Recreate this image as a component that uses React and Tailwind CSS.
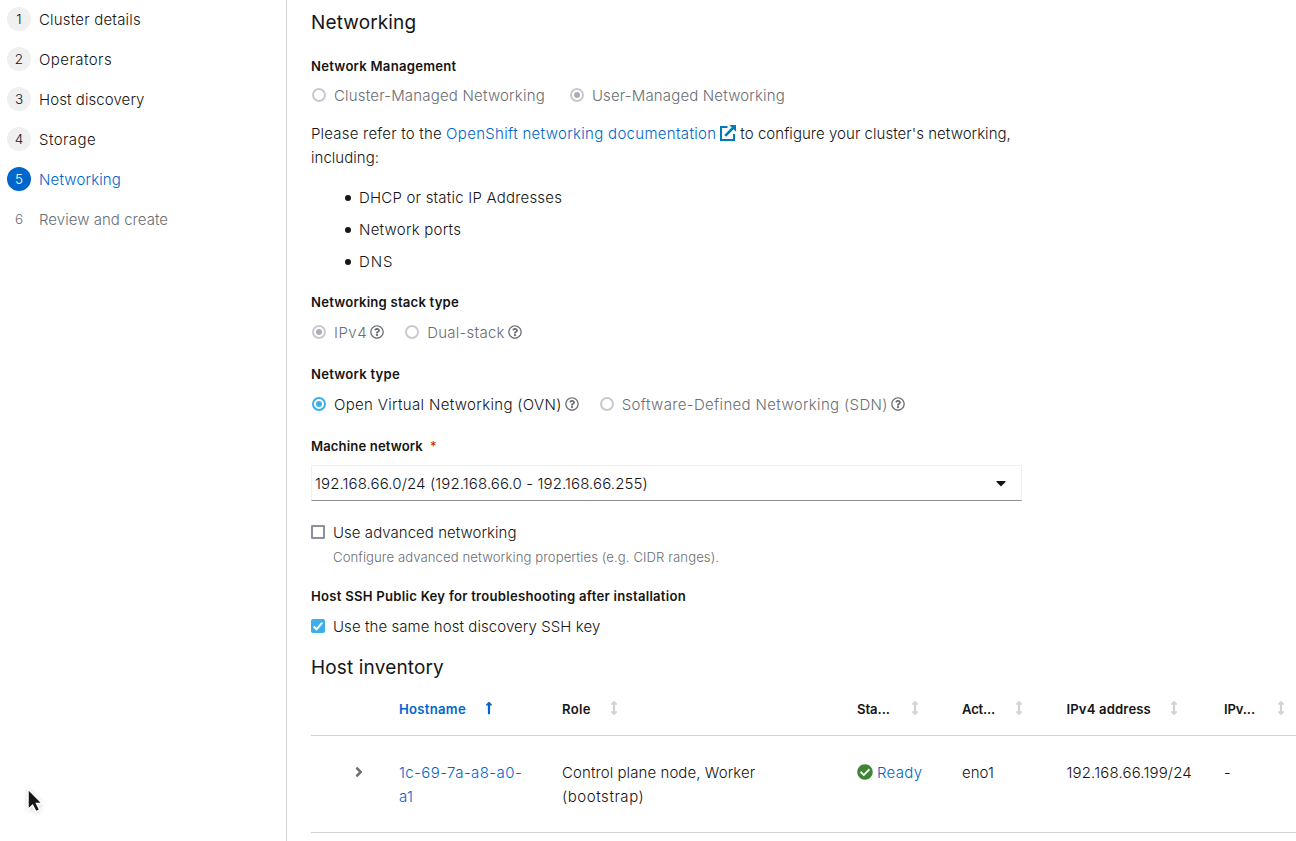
import React from "react";
import {
  FaAngleRight,
  FaArrowsAltV,
  FaCaretDown,
  FaCheckCircle,
  FaLongArrowAltUp,
  FaRegQuestionCircle,
} from "react-icons/fa";

const steps = [
  { label: "Cluster details", tracking: "tracking-[0.2px]" },
  { label: "Operators", tracking: "tracking-[0.44px]" },
  { label: "Host discovery", tracking: "tracking-[0.08px]" },
  { label: "Storage", tracking: "tracking-[0.44px]" },
  { label: "Networking", state: "current", tracking: "tracking-[0.15px]" },
  { label: "Review and create", state: "disabled", tracking: "tracking-[0.04px]" },
];

function Step({ number, label, state, tracking = "" }) {
  const circle =
    state === "current"
      ? "bg-[#0066cc] text-white"
      : state === "disabled"
        ? "text-[#6a6e73]"
        : "bg-[#f0f0f0] text-[#151515]";
  const text =
    state === "current" ? "text-[#0066cc]" : state === "disabled" ? "text-[#6a6e73]" : "text-[#151515]";
  return (
    <li className="flex h-6 items-center gap-2">
      <span className={`flex size-6 items-center justify-center rounded-full text-[13.5px] ${circle}`}>
        {number}
      </span>
      <span className={`pt-px ${text} ${tracking}`}>{label}</span>
    </li>
  );
}

function FieldLabel({ className = "", children }) {
  return (
    <div className={`flex h-[21px] items-center text-[13.125px] font-semibold text-[#151515] ${className}`}>
      {children}
    </div>
  );
}

function Radio({ label, checked, disabled, help, className = "" }) {
  const ring = disabled ? "border-[#c9c9d0]" : "border-[#3daee9]";
  const dot = disabled ? "bg-[#adadb8]" : "bg-[#3daee9]";
  return (
    <div className="flex h-6 items-center">
      <span className={`ml-px flex size-[14px] items-center justify-center rounded-full border-2 ${ring}`}>
        {checked && <span className={`size-[6px] rounded-full ${dot}`} />}
      </span>
      <span
        className={`ml-2 whitespace-nowrap pt-px ${disabled ? "text-[#6a6e73]" : "text-[#151515]"} ${className}`}
      >
        {label}
      </span>
      {help && <FaRegQuestionCircle className="ml-[3px] size-[14px] text-[#6a6e73]" />}
    </div>
  );
}

function ExternalLink() {
  return (
    <svg viewBox="0 0 16 16" className="mx-1 inline-block size-4 align-[-2px]" fill="none" stroke="#007bba">
      <path d="M7.5 2H1V15H14V9" strokeWidth="2" />
      <path d="M5.2 10.8L13 3" strokeWidth="2.6" />
      <path d="M9.3 0H16V6.7Z" fill="#007bba" stroke="none" />
    </svg>
  );
}

function Bullet({ children, tracking }) {
  return (
    <li className="flex items-center gap-2">
      <span className="size-1.5 rounded-full bg-[#151515]" />
      <span className={tracking}>{children}</span>
    </li>
  );
}

function HeaderCell({ children, gap = "ml-6", tracking = "" }) {
  return (
    <div className="flex items-center pb-0.5">
      <span className={`whitespace-nowrap pt-px ${tracking}`}>{children}</span>
      <FaArrowsAltV className={`h-[14px] w-2 shrink-0 text-[#d2d2d2] ${gap}`} />
    </div>
  );
}

function Cursor() {
  return (
    <svg viewBox="0 0 20 30" className="absolute left-[25px] top-[786px] h-[30px] w-5 drop-shadow-sm">
      <path
        d="M3 3v20.5l4.6-4.2 3.2 6.4 4-1.8-3.2-6.3h6Z"
        fill="#151515"
        stroke="#fff"
        strokeWidth="1.5"
      />
    </svg>
  );
}

const columns = "grid grid-cols-[88px_163px_295px_105px_104.5px_157.5px_90px]";

export default function App() {
  return (
    <div className="relative flex h-screen w-full overflow-hidden bg-white font-['Inter',sans-serif] text-[15px] font-[350] leading-6 text-[#151515]">
      <nav className="w-[287px] shrink-0 border-r border-[#d2d2d2] pl-[7px] pt-[7px]">
        <ol className="flex flex-col gap-4">
          {steps.map((step, i) => (
            <Step key={step.label} number={i + 1} {...step} />
          ))}
        </ol>
      </nav>

      <main className="min-w-0 flex-1 overflow-hidden pl-6 pt-[11px]">
        <h1 className="text-[19px] font-[440] tracking-[0.14px]">Networking</h1>

        <FieldLabel className="mt-5 tracking-[0.25px]">Network Management</FieldLabel>
        <div className="mt-[7px] flex gap-6">
          <Radio disabled label="Cluster-Managed Networking" className="tracking-[0.19px]" />
          <Radio disabled checked label="User-Managed Networking" className="tracking-[0.16px]" />
        </div>

        <p className="mt-[15px] w-[711px]">
          <span className="tracking-[0.2px]">Please refer to the</span>{" "}
          <a className="text-[#0066cc] tracking-[0.31px]">OpenShift networking documentation</a>
          <ExternalLink />
          <span className="tracking-[0.04px]">to configure your cluster's networking, including:</span>
        </p>
        <ul className="mt-4 flex flex-col gap-2 pl-[34px]">
          <Bullet tracking="tracking-[0.21px]">DHCP or static IP Addresses</Bullet>
          <Bullet tracking="tracking-[0.24px]">Network ports</Bullet>
          <Bullet tracking="tracking-[0.9px]">DNS</Bullet>
        </ul>

        <FieldLabel className="mt-[17px] tracking-[0.21px]">Networking stack type</FieldLabel>
        <div className="mt-2 flex gap-5">
          <Radio disabled checked help label="IPv4" className="tracking-[0.5px]" />
          <Radio disabled help label="Dual-stack" className="tracking-[0.26px]" />
        </div>

        <FieldLabel className="mt-[19px] tracking-[0.24px]">Network type</FieldLabel>
        <div className="mt-2 flex gap-5">
          <Radio checked help label="Open Virtual Networking (OVN)" className="tracking-[0.33px]" />
          <Radio disabled help label="Software-Defined Networking (SDN)" className="tracking-[0.34px]" />
        </div>

        <FieldLabel className="mt-[19px] tracking-[0.12px]">
          Machine network <span className="ml-[7px] font-normal text-[#c9190b]">*</span>
        </FieldLabel>
        <div className="mt-[9px] flex h-9 w-[711px] items-center justify-between border border-[#f0f0f0] border-b-[#8a8d90] pl-[3px] pr-[15px]">
          <span className="pt-0.5 tracking-[0.11px]">192.168.66.0/24 (192.168.66.0 - 192.168.66.255)</span>
          <FaCaretDown className="h-4 w-2.5" />
        </div>

        <div className="mt-[19px] flex h-6 items-center gap-2">
          <span className="size-[14px] rounded-[1px] border-2 border-[#8f8f9d]" />
          <span className="pt-0.5 tracking-[0.04px]">Use advanced networking</span>
        </div>
        <p className="mt-[3px] h-[21px] pl-[22px] text-[13.125px] leading-[21px] tracking-[0.09px] text-[#6a6e73]">
          Configure advanced networking properties (e.g. CIDR ranges).
        </p>

        <FieldLabel className="mt-[17px] tracking-[0.26px]">
          Host SSH Public Key for troubleshooting after installation
        </FieldLabel>
        <div className="mt-2 flex h-6 items-center gap-2">
          <span className="flex size-[14px] items-center justify-center rounded-[2px] bg-[#3daee9]">
            <svg viewBox="0 0 14 14" className="size-[14px]" fill="none" stroke="#fff" strokeWidth="2">
              <path d="M2.7 7.5L5.6 10.2L11.3 3.7" />
            </svg>
          </span>
          <span className="pt-0.5 tracking-[0.07px]">Use the same host discovery SSH key</span>
        </div>

        <h2 className="mt-[18px] text-[19px] font-[440] tracking-[0.15px]">Host inventory</h2>
        <div className="mt-[3px] w-[1003px]">
          <div className={`${columns} h-[53px] border-b border-[#d2d2d2] text-[13.125px] font-semibold`}>
            <div />
            <div className="flex items-center pb-0.5 text-[#0066cc]">
              <span className="pt-px tracking-[0.28px]">Hostname</span>
              <FaLongArrowAltUp className="ml-[19px] h-[14px] w-2" />
            </div>
            <HeaderCell gap="ml-[19px]" tracking="tracking-[0.35px]">Role</HeaderCell>
            <HeaderCell gap="ml-[21px]" tracking="tracking-[-0.05px]">Sta...</HeaderCell>
            <HeaderCell gap="ml-5" tracking="tracking-[-0.2px]">Act...</HeaderCell>
            <HeaderCell gap="ml-[19px]" tracking="tracking-[0.14px]">IPv4 address</HeaderCell>
            <HeaderCell gap="ml-[22px]" tracking="tracking-[-0.14px]">IPv...</HeaderCell>
          </div>
          <div className={`${columns} h-[97px] border-b border-[#d2d2d2] pt-[25px]`}>
            <div className="-mt-px flex h-6 items-center pl-[43px]">
              <FaAngleRight className="h-4 w-2.5 text-[#6a6e73]" />
            </div>
            <div className="w-[130px] text-[#0066cc] tracking-[0.42px]">1c-69-7a-a8-a0-a1</div>
            <div className="w-[220px] tracking-[0.08px]">
              Control plane node, Worker <span className="tracking-[0.55px]">(bootstrap)</span>
            </div>
            <div className="flex h-6 items-center gap-1">
              <FaCheckCircle className="-mt-0.5 size-4 text-[#3e8635]" />
              <span className="text-[#0066cc] tracking-[0.3px]">Ready</span>
            </div>
            <div>eno1</div>
            <div className="tracking-[0.16px]">192.168.66.199/24</div>
            <div>-</div>
          </div>
        </div>
      </main>

      <Cursor />
    </div>
  );
}
